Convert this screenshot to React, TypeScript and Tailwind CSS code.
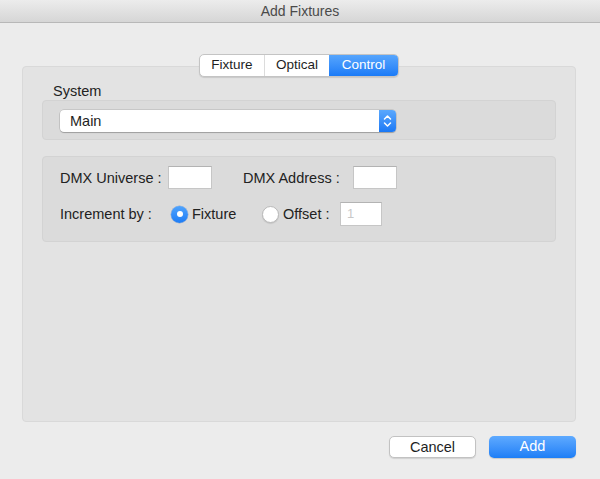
import React from "react";

function Tabs() {
    return (
        <div className="relative z-10 flex justify-center">
            <div className="flex h-[23px] rounded-[5px] border border-[#c4c4c4] bg-white text-[13.5px] shadow-[0_1px_1px_rgba(0,0,0,0.12)] overflow-hidden">
                <div className="w-[65px] flex items-center justify-center text-[#1e1e1e] border-r border-[#dcdcdc]">
                    Fixture
                </div>
                <div className="w-[64px] flex items-center justify-center text-[#1e1e1e]">
                    Optical
                </div>
                <div className="w-[69px] flex items-center justify-center text-white bg-gradient-to-b from-[#56a5fd] to-[#1a7bf7]">
                    Control
                </div>
            </div>
        </div>
    );
}

function Select() {
    return (
        <div className="flex w-[336px] h-[22px] rounded-[4px] bg-white shadow-[0_0_0_0.5px_rgba(0,0,0,0.18),0_1px_1px_rgba(0,0,0,0.2)] overflow-hidden">
            <div className="flex-1 flex items-center pl-[10px] pt-[1px] text-[14.5px] text-[#1e1e1e]">
                Main
            </div>
            <div className="w-[17px] flex items-center justify-center bg-gradient-to-b from-[#5aa8fd] to-[#1978f5]">
                <svg width="9" height="14" viewBox="0 0 9 14" fill="none">
                    <path d="M1.5 5 L4.5 2 L7.5 5" stroke="white" strokeWidth="1.5" strokeLinecap="round" strokeLinejoin="round" />
                    <path d="M1.5 9 L4.5 12 L7.5 9" stroke="white" strokeWidth="1.5" strokeLinecap="round" strokeLinejoin="round" />
                </svg>
            </div>
        </div>
    );
}

function TextBox({ className, value, dim }: { className: string; value?: string; dim?: boolean }) {
    return (
        <div
            className={
                "bg-white border border-[#c6c6c6] border-t-[#b3b3b3] flex items-center pl-[6px] text-[13px] " +
                (dim ? "text-[#c8c8c8] " : "text-[#1e1e1e] ") +
                className
            }
        >
            {value}
        </div>
    );
}

function Radio({ checked }: { checked?: boolean }) {
    if (checked) {
        return (
            <div className="w-[17px] h-[17px] rounded-full bg-gradient-to-b from-[#4fa3fd] to-[#1c7cf5] flex items-center justify-center shadow-[0_0_0_0.5px_rgba(0,60,160,0.3)]">
                <div className="w-[6px] h-[6px] rounded-full bg-white" />
            </div>
        );
    }
    return (
        <div className="w-[17px] h-[17px] rounded-full bg-white border border-[#b9b9b9] shadow-[0_1px_1px_rgba(0,0,0,0.1)]" />
    );
}

export default function App() {
    return (
        <div className="w-[600px] h-[479px] bg-[#ececec] flex flex-col font-['Liberation_Sans',Arial,sans-serif] text-[#222]">
            <div className="h-[23px] shrink-0 flex items-center justify-center border-b border-[#b8b8b8] bg-gradient-to-b from-[#ececec] to-[#d6d6d6] text-[14px] text-[#4a4a4a]">
                Add Fixtures
            </div>

            <div className="flex flex-col pl-[22px] pr-[24px] pt-[31px]">
                <Tabs />

                <div className="-mt-[11px] h-[356px] rounded-[4px] border border-[#d9d9d9] bg-[#e3e3e3] px-[19px] pt-[16px]">
                    <div className="pl-[11px] h-[16px] text-[14.5px] leading-[16px] text-[#222]">System</div>
                    <div className="mt-[1px] h-[40px] rounded-[4px] border border-[#d3d3d3] bg-[#dbdbdb] pl-[17px] pt-[9px]">
                        <Select />
                    </div>

                    <div className="mt-[16px] h-[86px] rounded-[4px] border border-[#d3d3d3] bg-[#dbdbdb] pl-[17px] pt-[9px] text-[14.5px]">
                        <div className="flex items-center h-[23px]">
                            <div className="w-[108px] pt-[2px]">DMX Universe :</div>
                            <TextBox className="w-[44px] h-[23px]" />
                            <div className="ml-[31px] w-[110px] pt-[2px]">DMX Address :</div>
                            <TextBox className="w-[44px] h-[23px]" />
                        </div>
                        <div className="mt-[13px] flex items-center h-[24px]">
                            <div className="w-[111px] pt-[2px]">Increment by :</div>
                            <div className="w-[91px] flex items-center">
                                <Radio checked />
                                <span className="ml-[4px] pt-[2px]">Fixture</span>
                            </div>
                            <div className="flex items-center">
                                <Radio />
                                <span className="ml-[4px] pt-[2px] w-[57px]">Offset :</span>
                            </div>
                            <TextBox className="w-[42px] h-[24px]" value="1" dim />
                        </div>
                    </div>
                </div>

                <div className="mt-[14px] flex justify-end gap-[13px] text-[14.5px]">
                    <button className="w-[87px] h-[22px] rounded-[5px] bg-white border border-[#c2c2c2] shadow-[0_1px_1px_rgba(0,0,0,0.12)] text-[#1e1e1e]">
                        Cancel
                    </button>
                    <button className="w-[87px] h-[22px] rounded-[5px] bg-gradient-to-b from-[#5eaaff] to-[#1c7ef6] text-white shadow-[0_1px_1px_rgba(0,0,0,0.15)]">
                        Add
                    </button>
                </div>
            </div>
        </div>
    );
}
